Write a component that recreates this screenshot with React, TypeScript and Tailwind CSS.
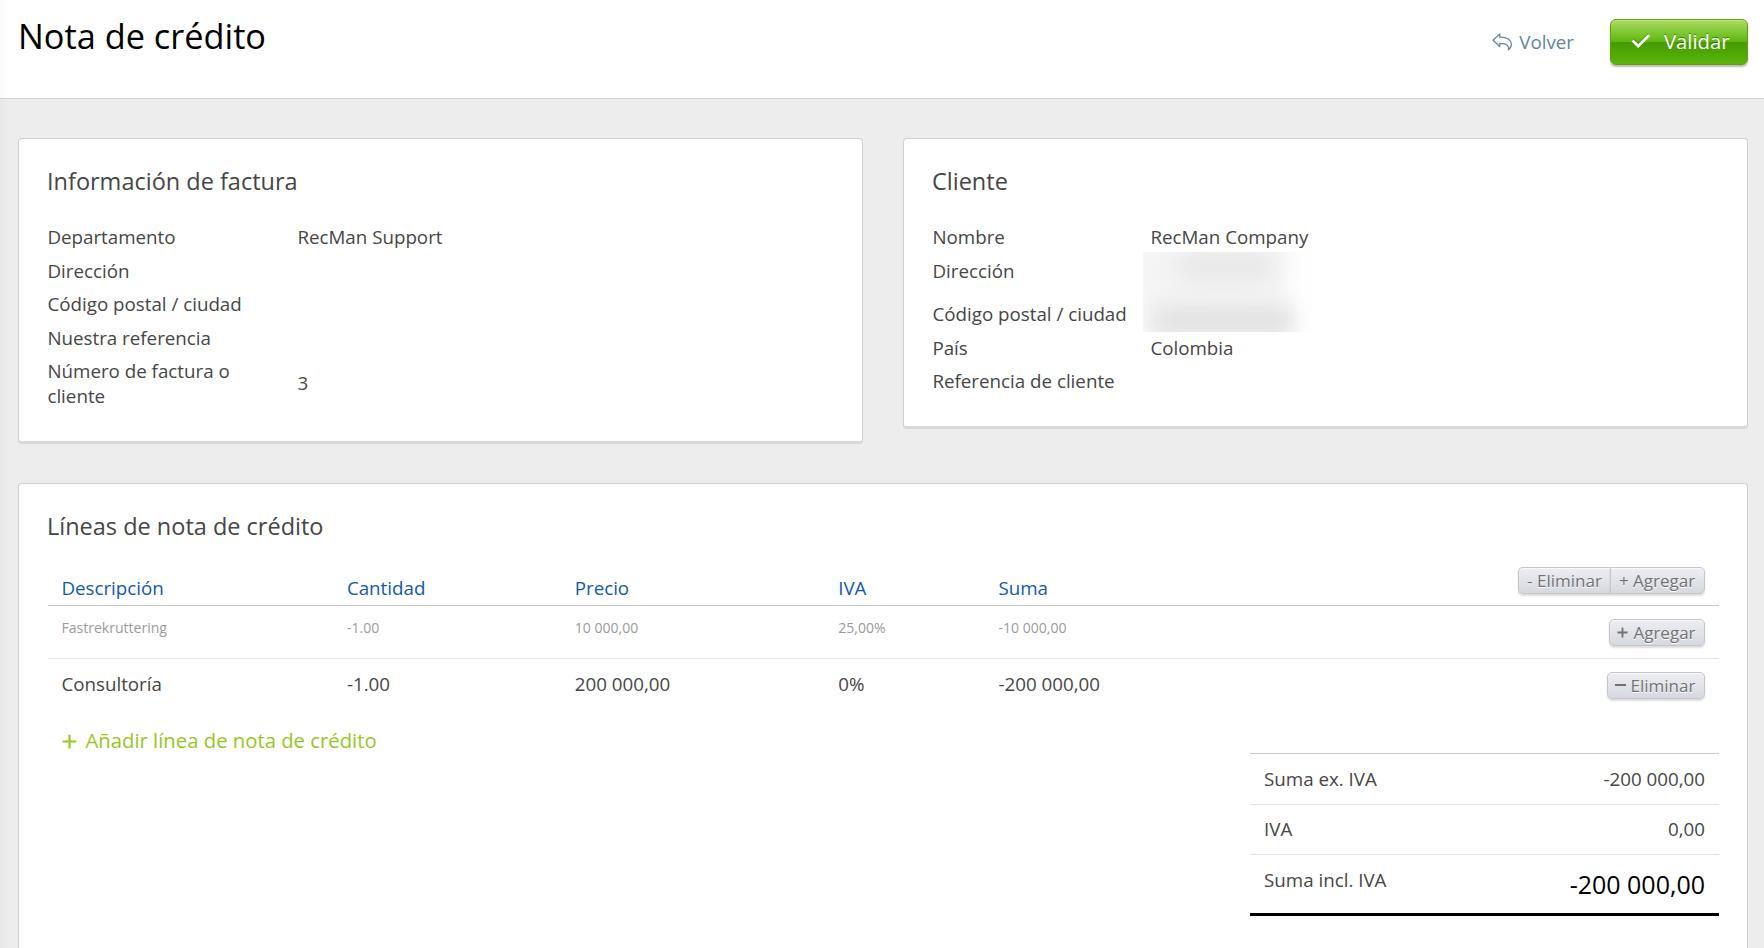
import React from 'react';

type InfoRow = { label: string; value?: string; className?: string };

const invoiceInfo: InfoRow[] = [
  { label: 'Departamento', value: 'RecMan Support' },
  { label: 'Dirección' },
  { label: 'Código postal / ciudad' },
  { label: 'Nuestra referencia' },
  { label: 'Número de factura o cliente', value: '3' },
];

const clientInfo: InfoRow[] = [
  { label: 'Nombre', value: 'RecMan Company' },
  { label: 'Dirección' },
  { label: 'Código postal / ciudad', className: 'mt-[10px]' },
  { label: 'País', value: 'Colombia' },
  { label: 'Referencia de cliente' },
];

const BackIcon = () => (
  <svg width="21" height="18" viewBox="0 0 21 18" fill="none" stroke="#64839e" strokeWidth="1.25" strokeLinejoin="round" aria-hidden="true">
    <path d="M1 7.2 7.8.9v3.3c7.2-.2 11.5 2.4 11.5 7.4 0 2.3-1 4-2.8 5.2.6-4.300-1.700-6.500-8.700-6.500v3.200z" />
  </svg>
);

const CheckIcon = () => (
  <svg width="20" height="16" viewBox="0 0 20 16" fill="none" aria-hidden="true">
    <path d="M2 6.5 7.2 11.7 18 1" stroke="#2f6b00" strokeOpacity=".5" strokeWidth="2.6" />
    <path d="M1.5 7.5 7.2 13 18.3 2" stroke="#fff" strokeWidth="2.7" />
  </svg>
);

const PlusIcon = ({ size, width }: { size: number; width: number }) => (
  <svg width={size} height={size} viewBox="0 0 12 12" stroke="currentColor" strokeWidth={width} aria-hidden="true">
    <path d="M6 .5v11M.5 6h11" />
  </svg>
);

const Card = ({ title, className = '', children }: { title: string; className?: string; children: React.ReactNode }) => (
  <section className={`bg-white border border-[#d0d0d0] border-b-[3px] border-b-[#d8d8d8] rounded-[4px] px-[29px] pt-[27px] ${className}`}>
    <h2 className="-ml-px text-[23.5px] leading-[30px]">{title}</h2>
    {children}
  </section>
);

const InfoList = ({ rows, labelWidth }: { rows: InfoRow[]; labelWidth: string }) => (
  <dl className="mt-[24.4px] -ml-[0.6px]">
    {rows.map((row) => (
      <div key={row.label} className={`flex items-center py-[4.6px] ${row.className ?? ''}`}>
        <dt className={`shrink-0 ${labelWidth}`}>{row.label}</dt>
        <dd>{row.value}</dd>
      </div>
    ))}
  </dl>
);

const SmallButton = ({ className = '', children }: { className?: string; children: React.ReactNode }) => (
  <button
    className={`h-[27px] pt-px flex items-center justify-center border border-[#c6c6c8] bg-linear-to-b from-[#eeeef3] to-[#d5d9df] text-[17px] leading-[24px] text-[#727272] [text-shadow:0_1px_0_#fff] shadow-[inset_0_1px_0_#f8f8fa,0_2px_2px_rgba(0,0,0,0.14)] ${className}`}
  >
    {children}
  </button>
);

const gridCols = 'grid grid-cols-[285.5px_227.8px_263.5px_160.3px_1fr] pl-[13.4px] pr-[14px]';

export default function App() {
  return (
    <div className="relative h-[948px] overflow-hidden bg-[#ededed] font-['Open_Sans',sans-serif] text-[18.75px] leading-[24.375px] text-[#464646]">
      <header className="h-[99px] bg-white border-b border-[#d3d3d3] flex justify-between pl-[18px] pr-4">
        <h1 className="mt-[14px] text-[34.3px] leading-[44px] text-black">Nota de crédito</h1>
        <div className="flex items-start">
          <a className="mt-[29px] mr-[36px] flex items-center gap-[6px] text-[18.75px] leading-[26px] text-[#64839e]">
            <BackIcon />
            Volver
          </a>
          <button className="mt-[19px] w-[138px] h-[46px] pb-[2px] rounded-[6px] border border-[#6a9c10] bg-[linear-gradient(to_bottom,#acdb62_0%,#5fb70f_49%,#459a00_50%,#5ab50a_100%)] shadow-[inset_0_1px_0_#c3e58c,0_2px_2px_rgba(0,0,0,0.28)] flex items-center pl-[20px] gap-[13px] text-[20.3px] text-white [text-shadow:0_-1px_0_rgba(0,0,0,0.35)]">
            <CheckIcon />
            Validar
          </button>
        </div>
      </header>

      <main className="pl-[18px] pr-4 pt-[39px]">
        <div className="grid grid-cols-2 gap-10 items-start">
          <Card title="Información de factura" className="h-[306px]">
            <InfoList rows={invoiceInfo} labelWidth="w-[250px] pr-[50px]" />
          </Card>
          <Card title="Cliente" className="h-[291px] relative">
            <InfoList rows={clientInfo} labelWidth="w-[218px]" />
            {/* redacted address */}
            <div className="absolute left-[239px] top-[113px] w-[190px] h-[80px] overflow-hidden">
              <div className="absolute -left-5 -top-5 w-[165px] h-[120px] bg-[#f5f5f5] blur-[12px]"></div>
              <div className="absolute left-[35px] top-0 w-[95px] h-[28px] bg-[#e6e6e6] blur-[12px]"></div>
              <div className="absolute left-[12px] top-[54px] w-[138px] h-[30px] bg-[#e2e2e2] blur-[10px]"></div>
            </div>
          </Card>
        </div>

        <Card title="Líneas de nota de crédito" className="mt-[39px] h-[520px] pr-[28px]">
          <div className={`${gridCols} h-[65px] border-b border-[#c9c9c9] text-[#1259b0]`}>
            <span className="mt-[35px]">Descripción</span>
            <span className="mt-[35px]">Cantidad</span>
            <span className="mt-[35px]">Precio</span>
            <span className="mt-[35px]">IVA</span>
            <div className="flex justify-between">
              <span className="mt-[35px]">Suma</span>
              <div className="flex mt-[26px]">
                <SmallButton className="w-[92px] rounded-l-[5px] border-r-0">- Eliminar</SmallButton>
                <SmallButton className="w-[95px] rounded-r-[5px] pr-px">+ Agregar</SmallButton>
              </div>
            </div>
          </div>

          <div className={`${gridCols} h-[53px] border-b border-[#e3e3e3] text-[14.06px] leading-[20px] text-[#9b9b9b]`}>
            <span className="mt-[12px]">Fastrekruttering</span>
            <span className="mt-[12px]">-1.00</span>
            <span className="mt-[12px]">10 000,00</span>
            <span className="mt-[12px]">25,00%</span>
            <div className="flex justify-between">
              <span className="mt-[12px]">-10 000,00</span>
              <SmallButton className="mt-[13px] w-[96px] rounded-[5px] gap-[5px] pr-px">
                <span className="pb-[2px]">
                  <PlusIcon size={11} width={2} />
                </span>
                Agregar
              </SmallButton>
            </div>
          </div>

          <div className={`${gridCols} h-[52px]`}>
            <span className="mt-[13px]">Consultoría</span>
            <span className="mt-[13px]">-1.00</span>
            <span className="mt-[13px]">200 000,00</span>
            <span className="mt-[13px]">0%</span>
            <div className="flex justify-between">
              <span className="mt-[13px]">-200 000,00</span>
              <SmallButton className="mt-[13px] w-[98px] rounded-[5px] gap-[5px] pr-[2px]">
                <span className="w-[11px] h-[2px] mb-[3px] bg-[#727272]"></span>
                Eliminar
              </SmallButton>
            </div>
          </div>

          <div className="flex justify-between items-start">
            <a className="mt-4 pl-[14px] flex items-center gap-[8.5px] text-[20.3px] leading-[26px] text-[#97c723]">
              <span className="pt-[3px]">
                <PlusIcon size={15} width={1.7} />
              </span>
              Añadir línea de nota de crédito
            </a>
            <div className="w-[469px] mt-[42px] border-t border-[#c9c9c9] border-b-[3px] border-b-black">
              <div className="h-[51px] px-[14px] pt-[13px] flex justify-between items-start border-b border-[#e3e3e3]">
                <span>Suma ex. IVA</span>
                <span>-200 000,00</span>
              </div>
              <div className="h-[50px] px-[14px] pt-[12px] flex justify-between items-start border-b border-[#e3e3e3]">
                <span>IVA</span>
                <span>0,00</span>
              </div>
              <div className="h-[58px] px-[14px] pt-[13px] flex justify-between items-start">
                <span>Suma incl. IVA</span>
                <span className="text-[25px] leading-[32px] text-black">-200 000,00</span>
              </div>
            </div>
          </div>
        </Card>
      </main>

      {/* soft shade along the left edge */}
      <div className="absolute inset-y-0 left-0 w-[8px] bg-linear-to-r from-black/[0.025] to-transparent pointer-events-none"></div>
    </div>
  );
}
